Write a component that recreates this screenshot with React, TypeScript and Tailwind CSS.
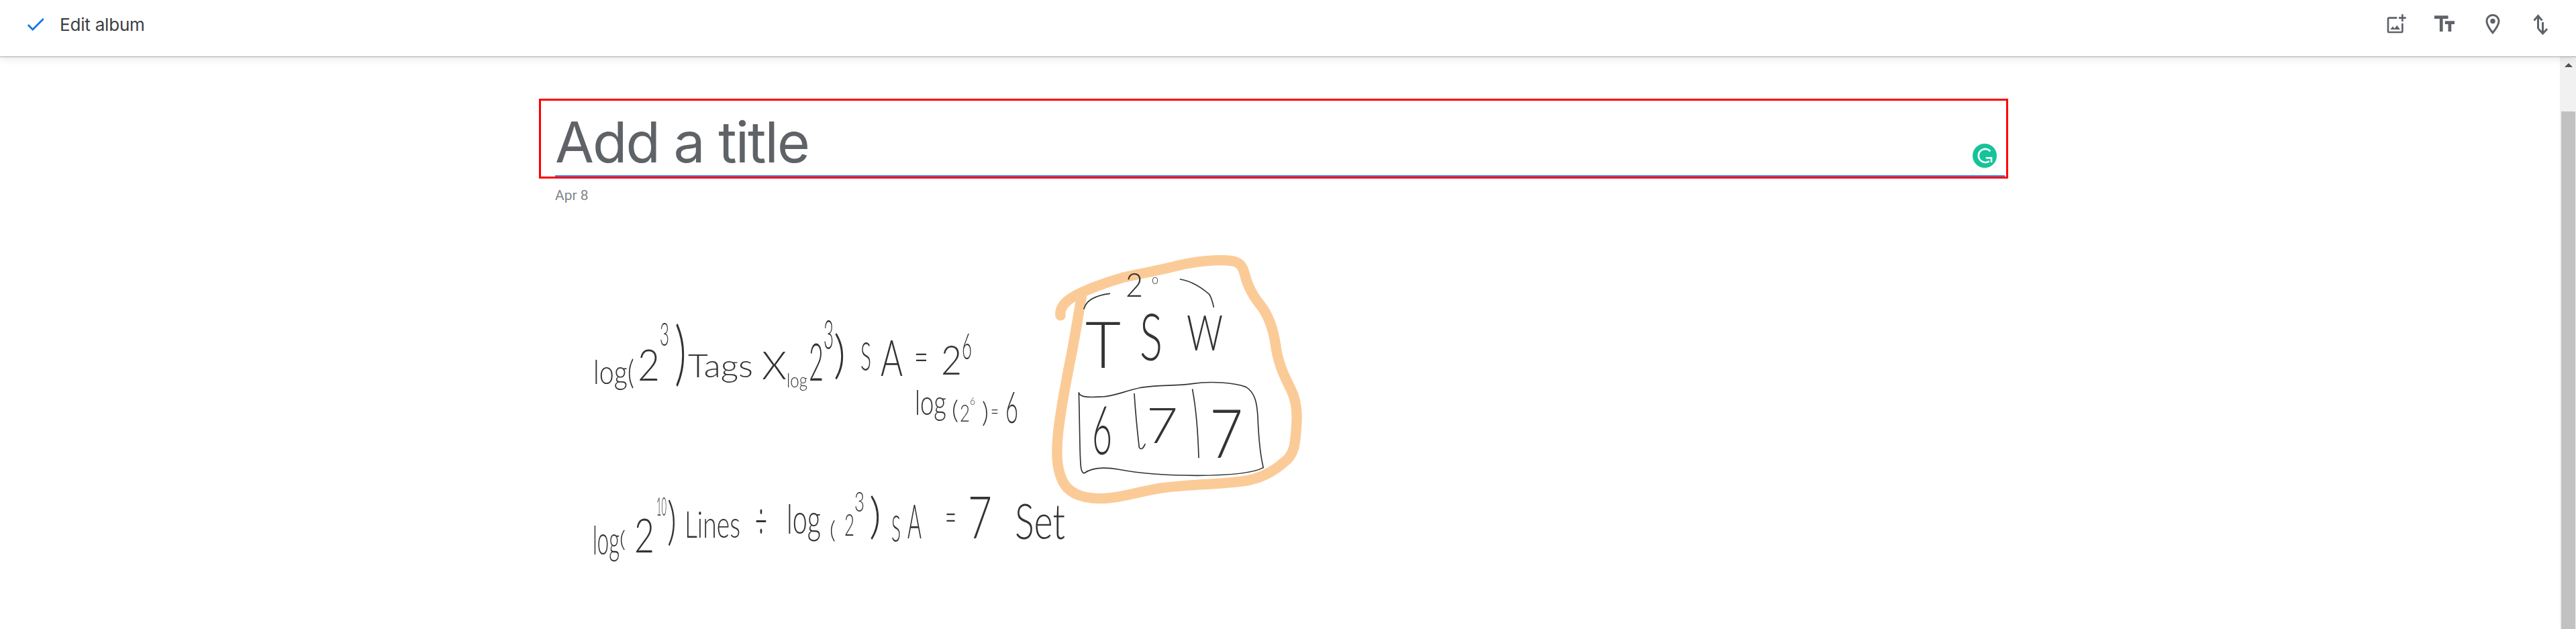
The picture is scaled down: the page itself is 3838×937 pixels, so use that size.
const hand = [
  // first line
  { t: "log(", x: 884, y: 572, s: 50, w: 61 },
  { t: "2", x: 950, y: 567, s: 65, w: 33 },
  { t: "3", x: 983, y: 515, s: 48, w: 14 },
  { t: ")", x: 1005, y: 562, s: 105, w: 18 },
  { t: "Tags", x: 1025, y: 562, s: 48, w: 97 },
  { t: "X", x: 1135, y: 565, s: 58, w: 37 },
  { t: "log", x: 1172, y: 577, s: 30, w: 31 },
  { t: "2", x: 1205, y: 567, s: 76, w: 22 },
  { t: "3", x: 1227, y: 520, s: 62, w: 15 },
  { t: ")", x: 1242, y: 555, s: 77, w: 18 },
  { t: "S", x: 1282, y: 552, s: 60, w: 16 },
  { t: "A", x: 1312, y: 560, s: 74, w: 33 },
  { t: "=", x: 1362, y: 552, s: 60, w: 21 },
  { t: "2", x: 1402, y: 558, s: 62, w: 31 },
  { t: "6", x: 1433, y: 535, s: 53, w: 15 },
  // worked answer under the first line
  { t: "log", x: 1363, y: 618, s: 52, w: 47 },
  { t: "(", x: 1418, y: 624, s: 38, w: 10 },
  { t: "2", x: 1430, y: 628, s: 36, w: 15 },
  { t: "6", x: 1445, y: 603, s: 16, w: 8 },
  { t: ")", x: 1463, y: 629, s: 42, w: 10 },
  { t: "=", x: 1476, y: 624, s: 34, w: 12 },
  { t: "6", x: 1498, y: 630, s: 66, w: 19 },
  // second line
  { t: "log", x: 883, y: 826, s: 60, w: 40 },
  { t: "(", x: 923, y: 815, s: 34, w: 9 },
  { t: "2", x: 945, y: 823, s: 70, w: 30 },
  { t: "10", x: 978, y: 768, s: 38, w: 15 },
  { t: ")", x: 994, y: 803, s: 77, w: 14 },
  { t: "Lines", x: 1020, y: 801, s: 56, w: 83 },
  { t: "÷", x: 1125, y: 804, s: 80, w: 18 },
  { t: "log", x: 1172, y: 795, s: 62, w: 51 },
  { t: "(", x: 1236, y: 802, s: 36, w: 9 },
  { t: "2", x: 1258, y: 798, s: 46, w: 15 },
  { t: "3", x: 1273, y: 762, s: 42, w: 15 },
  { t: ")", x: 1295, y: 794, s: 72, w: 18 },
  { t: "S", x: 1328, y: 807, s: 56, w: 14 },
  { t: "A", x: 1352, y: 802, s: 70, w: 21 },
  { t: "=", x: 1408, y: 792, s: 62, w: 17 },
  { t: "7", x: 1442, y: 802, s: 86, w: 36 },
  { t: "Set", x: 1512, y: 803, s: 72, w: 75 },
  // boxed cache address
  { t: "2", x: 1677, y: 442, s: 50, w: 26 },
  { t: "o", x: 1716, y: 423, s: 20, w: 10 },
  { t: "T", x: 1617, y: 548, s: 96, w: 53 },
  { t: "S", x: 1698, y: 537, s: 96, w: 34 },
  { t: "W", x: 1768, y: 522, s: 72, w: 54 },
  { t: "6", x: 1627, y: 677, s: 100, w: 30 },
  { t: "7", x: 1708, y: 660, s: 72, w: 47 },
  { t: "7", x: 1802, y: 682, s: 100, w: 50 },
];

function AddPhotoIcon() {
  return (
    <svg viewBox="0 0 24 24" className="w-8 h-8 fill-[#5f6368]">
      <path d="M18 20H4V6h9V4H4c-1.1 0-2 .9-2 2v14c0 1.1.9 2 2 2h14c1.1 0 2-.9 2-2v-9h-2v9zm-7.79-3.17l-1.96-2.36L5.5 18h11l-3.54-4.71zM20 4V1h-2v3h-3c.01.01 0 2 0 2h3v2.99c.01.01 2 0 2 0V6h3V4h-3z" />
    </svg>
  );
}

function TextFieldsIcon() {
  return (
    <svg viewBox="0 0 24 24" className="w-[38px] h-[38px] fill-[#5f6368]">
      <path d="M2.5 4v3h5v12h3V7h5V4h-13zm19 5h-9v3h3v7h3v-7h3V9z" />
    </svg>
  );
}

function PlaceIcon() {
  return (
    <svg viewBox="0 0 24 24" className="w-9 h-9 fill-[#5f6368]">
      <path d="M12 2C8.13 2 5 5.13 5 9c0 5.25 7 13 7 13s7-7.75 7-13c0-3.87-3.13-7-7-7zM7 9c0-2.76 2.24-5 5-5s5 2.24 5 5c0 2.88-2.88 7.19-5 9.88C9.92 16.21 7 11.85 7 9z" />
      <circle cx="12" cy="9" r="2.5" />
    </svg>
  );
}

function SwapIcon() {
  return (
    <svg viewBox="0 0 24 32" className="w-6 h-8 fill-none stroke-[#5f6368] stroke-[3]">
      <path d="M1.5 10.5L7.5 3.5L13.5 10.5M7.5 3.5V23" />
      <path d="M8 23L14.5 30L21 23M14.5 30V13" />
    </svg>
  );
}

function GrammarlyBadge() {
  return (
    <svg viewBox="0 0 36 36" className="absolute right-[12px] bottom-[11px] w-9 h-9">
      <circle cx="18" cy="18" r="18" fill="#15c39a" />
      <path
        d="M26.3 11.3A10 10 0 1 0 24.7 26"
        fill="none"
        stroke="#fff"
        strokeWidth="2.6"
      />
      <path d="M19.7 21.3H28V28" fill="none" stroke="#fff" strokeWidth="2.6" />
    </svg>
  );
}

export default function App() {
  return (
    <div className="h-[937px] w-full flex flex-col overflow-hidden bg-white font-['Roboto',sans-serif]">
      {/* Header */}
      <header className="relative z-10 h-[84px] shrink-0 flex items-start justify-between bg-white pr-4 shadow-[0_1px_1px_rgba(0,0,0,0.25),0_3px_12px_rgba(0,0,0,0.1)]">
        <div className="h-[72px] flex items-center">
          <svg viewBox="0 0 24 24" className="ml-9 w-[34px] h-[34px] fill-[#1a73e8]">
            <path d="M9 16.17L4.83 12l-1.42 1.41L9 19 21 7l-1.41-1.41z" />
          </svg>
          <span className="ml-[19px] text-[26px] text-[#3c4043] font-['Inter',sans-serif] tracking-[-0.2px]">Edit album</span>
        </div>
        <div className="flex">
          <div className="w-[72px] h-[72px] flex items-center justify-center"><AddPhotoIcon /></div>
          <div className="w-[72px] h-[72px] flex items-center justify-center"><TextFieldsIcon /></div>
          <div className="w-[72px] h-[72px] flex items-center justify-center"><PlaceIcon /></div>
          <div className="w-[72px] h-[72px] flex items-center justify-center"><SwapIcon /></div>
        </div>
      </header>

      <div className="flex-1 flex min-h-0">
        <main className="flex-1 min-w-0 overflow-hidden">
          {/* Title */}
          <div className="mt-[63px] ml-[803px] w-[2189px] h-[119px] border-[3px] border-[#ff0000] pl-[21px] pr-[2px]">
            <div className="relative h-full border-b-2 border-[#4285f4] flex items-end pb-px">
              <span className="text-[84px] leading-[96px] text-[#5f6368] font-['Inter',sans-serif] tracking-[-2px]">Add a title</span>
              <GrammarlyBadge />
            </div>
          </div>
          <div className="mt-[13px] ml-[827px] text-[21px] leading-6 text-[#80868b]">Apr 8</div>

          {/* Handwritten note */}
          <svg
            viewBox="840 360 1140 577"
            className="mt-[57px] ml-[840px] w-[1140px] h-[577px] blur-[0.5px]"
          >
            <g transform="translate(1500 360) scale(0.3333)" fill="none" strokeLinecap="round" strokeLinejoin="round">
              <path
                d="M240 330C235 290 265 265 300 245C340 222 430 185 520 160C610 140 700 125 760 108C850 85 950 80 1000 85C1040 88 1055 110 1065 150C1075 195 1105 250 1135 285C1170 330 1190 390 1200 450C1210 540 1240 600 1270 660C1295 710 1300 760 1295 820C1290 890 1290 950 1240 985C1190 1030 1130 1060 1060 1070C950 1085 820 1085 700 1100C590 1115 520 1145 430 1148C340 1150 270 1125 245 1060C220 1000 222 930 230 850C245 720 270 600 290 500C305 420 320 330 335 240"
                stroke="#fbcb97"
                strokeWidth="46"
              />
              <path
                d="M322 675C330 700 380 695 430 693C480 690 520 670 600 652C680 640 760 645 830 635C910 622 1020 630 1070 650C1110 675 1118 720 1122 780C1125 860 1132 950 1147 1010C1100 1035 1000 1045 850 1045C700 1045 590 1035 500 1018C430 1005 380 1010 345 1035C330 1030 330 1000 328 950C325 850 325 760 322 675"
                stroke="#333"
                strokeWidth="5"
              />
              <path d="M570 680C575 760 585 860 592 920C600 932 610 925 618 905" stroke="#333" strokeWidth="5" />
              <path d="M830 660C845 740 855 860 858 965" stroke="#333" strokeWidth="5" />
              <path d="M345 300C355 260 400 240 460 232" stroke="#333" strokeWidth="5" />
              <path d="M775 168C820 175 870 205 905 235C915 250 920 270 925 292" stroke="#333" strokeWidth="5" />
            </g>
            {hand.map((h, i) => (
              <text
                key={i}
                x={h.x}
                y={h.y}
                fontSize={h.s}
                textLength={h.w}
                lengthAdjust="spacingAndGlyphs"
                fill="#333"
                fontWeight={300}
                fontFamily="Lato, 'Open Sans', sans-serif"
              >
                {h.t}
              </text>
            ))}
          </svg>
        </main>

        {/* Scrollbar */}
        <div className="w-6 shrink-0 bg-[#f1f1f1] flex flex-col pl-[2px] pr-px">
          <div className="h-[82px] shrink-0 flex justify-center pt-[10px]">
            <div className="w-0 h-0 border-x-[6px] border-x-transparent border-b-[6px] border-b-[#505050]" />
          </div>
          <div className="flex-1 bg-[#c1c1c1]" />
        </div>
      </div>
    </div>
  );
}
